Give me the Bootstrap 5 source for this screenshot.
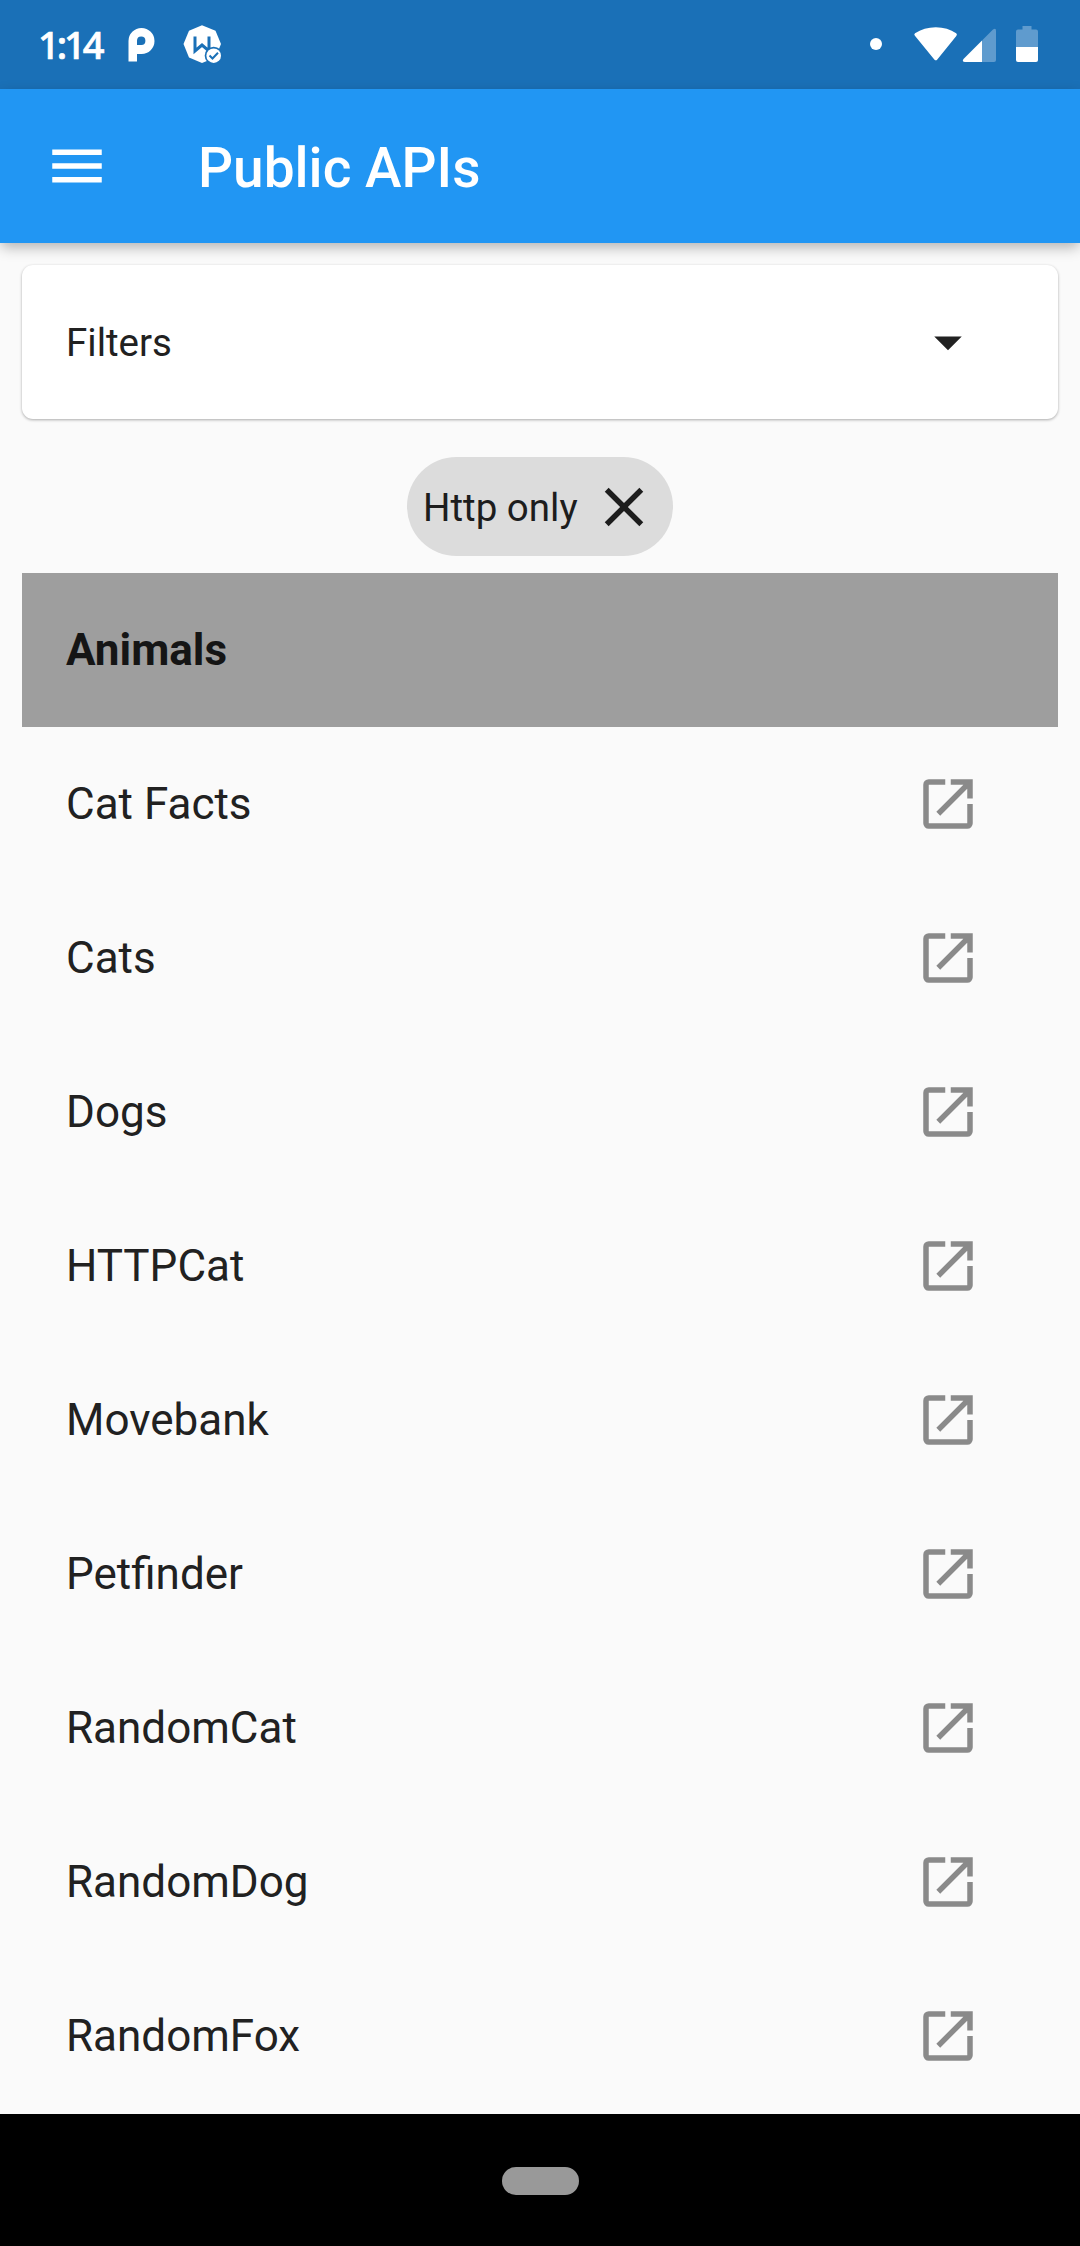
<!DOCTYPE html>
<html lang="en">
<head>
<meta charset="utf-8">
<meta name="viewport" content="width=device-width, initial-scale=1">
<title>Public APIs</title>
<link href="https://cdn.jsdelivr.net/npm/bootstrap@5.3.0/dist/css/bootstrap.min.css" rel="stylesheet">
<style>
body{font-family:Roboto,sans-serif;color:#212121;background:#fafafa;height:2246px;overflow:hidden}
svg{display:block;flex:none}
.status-strip{height:89px;background:#1a70b7;padding:0 40px 0 38px;color:#fff}
.clock{font:500 38px/88px "Noto Sans",sans-serif;letter-spacing:-3px;-webkit-text-stroke:.7px #fff;width:82px;height:89px;flex:none}
.app-header{height:154px;background:#2196f3;padding:0 44px;box-shadow:0 5px 13px -1px rgba(0,0,0,.3);z-index:2}
.app-title{font-size:55px;line-height:64px;font-weight:500;color:#fff;margin-left:88px;padding-top:3px}
.page-body{padding:22px 22px 0;height:1871px}
.filter-card{height:154px;border:0;border-radius:11px;padding:0 77px 0 44px;background:#fff;font-size:38.5px;box-shadow:0 1px 3px rgba(0,0,0,.32)}
.text-nudge{padding-top:2px}
.chip-area{height:154px;padding-top:21px}
.filter-chip{width:266px;height:99px;margin-top:17px;background:#dcdcdc;padding:0 16px;font-size:38.5px;color:#1d1d1d}
.api-row{height:154px;padding:0 77px 0 44px;font-size:44px;line-height:52px;border:0;background:transparent;color:#212121;border-radius:0}
.api-row.group-title{background:#9e9e9e;font-weight:700;color:#151515}
.api-row svg{fill:#8a8a8a}
.gesture-bar{height:132px;background:#000}
.gesture-pill{width:77px;height:28px;margin-top:1px;background:#999}
</style>
</head>
<body>
<svg width="0" height="0" class="position-absolute"><defs>
<symbol id="open" viewBox="0 0 24 24"><path d="M11 3v2H5v14h14v-7h2v7a2 2 0 0 1-2 2H5a2 2 0 0 1-2-2V5a2 2 0 0 1 2-2zM13 3h8v7h-2V6.410L9.170 16.240 7.760 14.830 17.590 5H13z"/></symbol>
</defs></svg>
<div class="status-strip d-flex align-items-center">
  <span class="clock">1:14</span>
  <svg width="110" height="89" viewBox="120 0 110 89">
    <path fill="#fff" fill-rule="evenodd" d="M128.500 61.500V41a13 13 0 1 1 13 13H137v7.500zM137 45h4.300a4.200 4.200 0 1 0-4.300-4.200z"/>
    <path fill="#fff" d="M202 25.300 215.500 30.800 221 44 215.500 57.500 202 63 189 57.500 183.500 44 189 30.800z"/>
    <path fill="none" stroke="#1a70b7" stroke-width="3" d="M195 36.500V51L202 45 209 51V36.500"/>
    <circle cx="213.700" cy="55.700" r="9" fill="#1a70b7"/><circle cx="213.700" cy="55.700" r="7.300" fill="#fff"/>
    <path fill="none" stroke="#1a70b7" stroke-width="2" d="M209.500 55.500l3 3 5.500-5.700"/>
  </svg>
  <svg class="ms-auto" width="180" height="89" viewBox="860 0 180 89">
    <circle cx="876" cy="44" r="6" fill="#fff"/>
    <path fill="#fff" d="M914.900 35.800Q913.600 34.500 915 33.200Q924 27.200 935.800 27.200T956.200 33.200Q957.600 34.500 956.300 36L937.300 59.500Q935.800 61.200 934.300 59.500z"/>
    <path fill="#5f9bce" d="M982 40.500 993 29.400Q996 27.500 996 30.500V60Q996 62 994 62H982z"/>
    <path fill="#fff" d="M982 40.500V62H965Q961.500 61.500 963.500 59z"/>
    <path fill="#5f9bce" d="M1022.500 26h9v3.500h4.500q2 0 2 2V47h-22V31.500q0-2 2-2h4.500z"/>
    <path fill="#fff" d="M1016 47h22v13q0 2-2 2h-18q-2 0-2-2z"/>
  </svg>
</div>
<nav class="app-header d-flex align-items-center position-relative">
  <svg width="66" height="66" viewBox="0 0 24 24" fill="#fff"><path d="M3 18h18v-2H3zm0-5h18v-2H3zm0-7v2h18V6z"/></svg>
  <span class="app-title">Public APIs</span>
</nav>
<main class="page-body overflow-hidden">
  <div class="card filter-card flex-row align-items-center justify-content-between">
    <span class="text-nudge">Filters</span>
    <svg width="66" height="66" viewBox="0 0 24 24" fill="#212121"><path d="M7 10l5 5 5-5z"/></svg>
  </div>
  <div class="chip-area d-flex justify-content-center">
    <div class="filter-chip rounded-pill d-flex align-items-center justify-content-between">
      <span class="text-nudge">Http only</span>
      <svg width="66" height="66" viewBox="0 0 24 24" fill="#1d1d1d"><path d="M19 6.410 17.590 5 12 10.590 6.410 5 5 6.410 10.590 12 5 17.590 6.410 19 12 13.410 17.590 19 19 17.590 13.410 12z"/></svg>
    </div>
  </div>
  <div class="list-group list-group-flush rounded-0">
    <div class="list-group-item api-row group-title d-flex align-items-center">Animals</div>
    <div class="list-group-item api-row d-flex align-items-center justify-content-between"><span>Cat Facts</span><svg width="66" height="66"><use href="#open"/></svg></div>
    <div class="list-group-item api-row d-flex align-items-center justify-content-between"><span>Cats</span><svg width="66" height="66"><use href="#open"/></svg></div>
    <div class="list-group-item api-row d-flex align-items-center justify-content-between"><span>Dogs</span><svg width="66" height="66"><use href="#open"/></svg></div>
    <div class="list-group-item api-row d-flex align-items-center justify-content-between"><span>HTTPCat</span><svg width="66" height="66"><use href="#open"/></svg></div>
    <div class="list-group-item api-row d-flex align-items-center justify-content-between"><span>Movebank</span><svg width="66" height="66"><use href="#open"/></svg></div>
    <div class="list-group-item api-row d-flex align-items-center justify-content-between"><span>Petfinder</span><svg width="66" height="66"><use href="#open"/></svg></div>
    <div class="list-group-item api-row d-flex align-items-center justify-content-between"><span>RandomCat</span><svg width="66" height="66"><use href="#open"/></svg></div>
    <div class="list-group-item api-row d-flex align-items-center justify-content-between"><span>RandomDog</span><svg width="66" height="66"><use href="#open"/></svg></div>
    <div class="list-group-item api-row d-flex align-items-center justify-content-between"><span>RandomFox</span><svg width="66" height="66"><use href="#open"/></svg></div>
  </div>
</main>
<footer class="gesture-bar d-flex align-items-center justify-content-center"><div class="gesture-pill rounded-pill"></div></footer>
<script src="https://cdn.jsdelivr.net/npm/bootstrap@5.3.0/dist/js/bootstrap.bundle.min.js"></script>
</body>
</html>
